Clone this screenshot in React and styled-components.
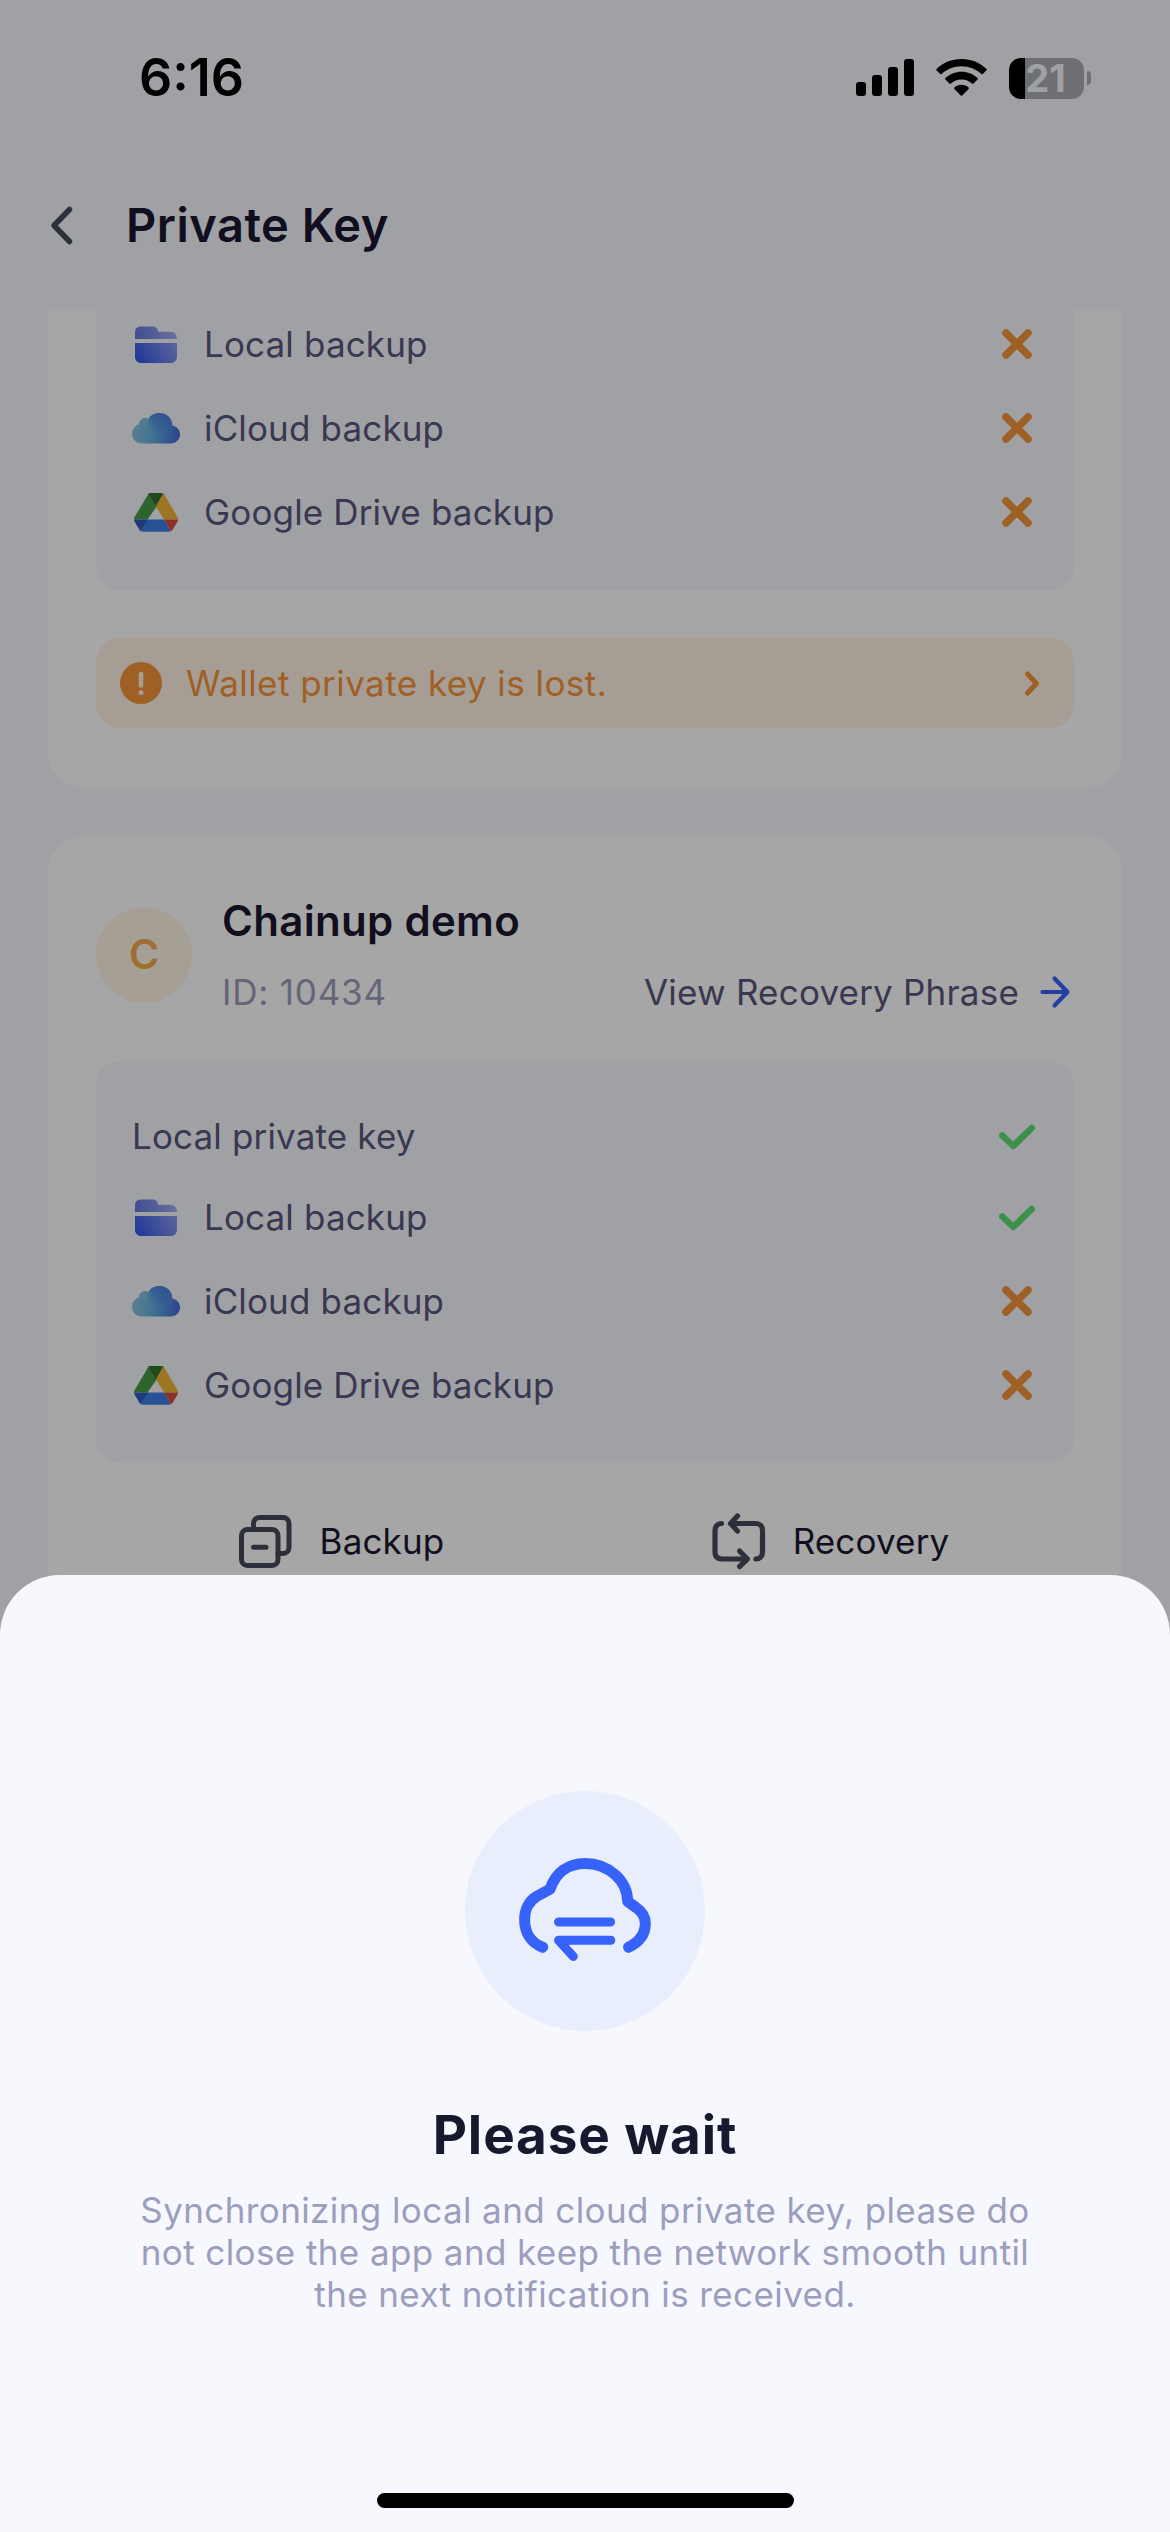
import React from "react";
import styled, { createGlobalStyle } from "styled-components";

const GlobalStyle = createGlobalStyle`
  *, *::before, *::after { box-sizing: border-box; }
  html, body { margin: 0; padding: 0; }
  body {
    background: #f6f8fe;
    font-family: Inter, "Liberation Sans", sans-serif;
  }
  svg { display: block; flex: none; }
`;

const Screen = styled.div`
  position: relative;
  width: 1170px;
  height: 2532px;
  overflow: hidden;
  background: #f6f8fe;
  display: flex;
  flex-direction: column;
`;

const StatusBar = styled.div`
  height: 156px;
  padding: 0 79px 0 139px;
  display: flex;
  align-items: center;
  justify-content: space-between;
`;

const Time = styled.div`
  font-size: 52px;
  font-weight: 600;
  line-height: 60px;
  letter-spacing: 0;
  color: #000;
`;

const StatusIcons = styled.div`
  display: flex;
  align-items: center;
  gap: 22px;
`;

const BatteryWrap = styled.div`
  display: flex;
  align-items: center;
  gap: 3px;
`;

const Battery = styled.div`
  width: 75px;
  height: 41px;
  padding-right: 2px;
  border-radius: 12px;
  background: linear-gradient(90deg, #000 16px, #abadb2 16px);
  color: #f6f8fe;
  font-size: 38px;
  font-weight: 700;
  line-height: 41px;
  letter-spacing: 0;
  text-align: center;
`;

const BatteryKnob = styled.div`
  width: 4px;
  height: 14px;
  border-radius: 0 4px 4px 0;
  background: #abadb2;
`;

const NavBar = styled.div`
  height: 153px;
  padding: 0 48px 15px;
  display: flex;
  align-items: center;
  gap: 48px;
`;

const NavTitle = styled.h1`
  margin: 0;
  font-size: 47px;
  font-weight: 600;
  line-height: 60px;
  letter-spacing: 0.5px;
  color: #1b1830;
`;

const List = styled.div`
  flex: 1;
  overflow: hidden;
  padding: 0 48px;
  display: flex;
  flex-direction: column;
  gap: 48px;
`;

const Card = styled.section`
  flex: none;
  padding: ${(p) => (p.$clipped ? "0 48px 60px" : "60px 48px 60px")};
  border-radius: ${(p) => (p.$clipped ? "0 0 36px 36px" : "36px")};
  background: #fff;
`;

const Panel = styled.div`
  margin-top: ${(p) => (p.$clipped ? "-7px" : "47px")};
  padding: ${(p) => (p.$clipped ? "0 36px 36px" : "36px")};
  border-radius: ${(p) => (p.$clipped ? "0 0 24px 24px" : "24px")};
  background: #f6f8fe;
`;

const Row = styled.div`
  height: ${(p) => p.$height || 84}px;
  display: flex;
  align-items: center;
  gap: 24px;
`;

const Label = styled.span`
  flex: ${(p) => (p.$grow ? 1 : "none")};
  font-size: 35px;
  line-height: 44px;
  letter-spacing: ${(p) => p.$spacing ?? 0.15}px;
  color: ${(p) => p.$color || "#59567b"};
  white-space: nowrap;
`;

const Banner = styled.div`
  height: 90px;
  margin-top: 48px;
  padding: 0 24px;
  border-radius: 24px;
  background: #fff2e5;
  display: flex;
  align-items: center;
  gap: 24px;
`;

const Header = styled.div`
  display: flex;
  align-items: center;
  gap: 30px;
`;

const Avatar = styled.div`
  width: 96px;
  height: 96px;
  flex: none;
  border-radius: 50%;
  background: #fff5e6;
  color: #f6a94a;
  font-size: 41px;
  font-weight: 600;
  line-height: 95px;
  text-align: center;
`;

const HeaderBody = styled.div`
  flex: 1;
  display: flex;
  flex-direction: column;
  gap: 24px;
`;

const WalletName = styled.h2`
  margin: 0;
  font-size: 42px;
  font-weight: 600;
  line-height: 50px;
  letter-spacing: 0.3px;
  color: #1b1830;
`;

const HeaderLine = styled.div`
  display: flex;
  align-items: center;
  justify-content: space-between;
`;

const LinkGroup = styled.div`
  display: flex;
  align-items: center;
  gap: 19px;
`;

const Actions = styled.div`
  padding-top: 50px;
  display: grid;
  grid-template-columns: 1fr 1fr;
`;

const Action = styled.div`
  height: 56px;
  display: flex;
  align-items: center;
  justify-content: center;
  gap: 27px;
`;

const Overlay = styled.div`
  position: absolute;
  inset: 0;
  background: rgba(0, 0, 0, 0.35);
  display: flex;
  flex-direction: column;
  justify-content: flex-end;
`;

const Sheet = styled.div`
  height: 957px;
  padding: 216px 0 24px;
  border-radius: 60px 60px 0 0;
  background: #f6f8fe;
  display: flex;
  flex-direction: column;
  align-items: center;
`;

const SheetIcon = styled.div`
  width: 240px;
  height: 240px;
  border-radius: 50%;
  background: #e9eefd;
`;

const SheetTitle = styled.h2`
  margin: 72px 0 0;
  font-size: 53px;
  font-weight: 700;
  line-height: 64px;
  letter-spacing: 0.9px;
  color: #18182e;
`;

const SheetText = styled.p`
  margin: 22px 0 0;
  font-size: 35px;
  line-height: 42px;
  letter-spacing: 0.4px;
  color: #9d9dbd;
  text-align: center;
  white-space: nowrap;
`;

const HomeIndicator = styled.div`
  width: 417px;
  height: 15px;
  margin-top: auto;
  border-radius: 8px;
  background: #000;
`;

const SignalIcon = () => (
  <svg width="58" height="38" viewBox="0 0 58 38">
    <rect x="0" y="23" width="10" height="14" rx="3" />
    <rect x="16" y="16" width="10" height="21" rx="3" />
    <rect x="32" y="8" width="10" height="29" rx="3" />
    <rect x="48" y="0" width="10" height="37" rx="3" />
  </svg>
);

const WifiIcon = () => (
  <svg width="51" height="38" viewBox="0 0 51 38">
    <path d="M25.5 0C35.200 0 44 3.700 50.500 9.900C50.900 10.300 50.900 10.900 50.500 11.300L46.800 15C46.400 15.400 45.800 15.400 45.400 15C40.200 10.200 33.200 7.300 25.500 7.300C17.800 7.300 10.800 10.200 5.600 15C5.200 15.400 4.600 15.400 4.200 15L.5 11.300C.1 10.900 .1 10.300 .5 9.900C7 3.700 15.800 0 25.500 0Z" />
    <path d="M25.500 12.800C31.700 12.800 37.400 15.200 41.600 19.100C42 19.500 42 20.100 41.600 20.500L37.500 24.500C37.100 24.900 36.500 24.900 36.100 24.500C33.300 22 29.600 20.400 25.500 20.400C21.400 20.400 17.700 22 14.900 24.500C14.500 24.900 13.900 24.900 13.500 24.500L9.400 20.500C9 20.100 9 19.500 9.400 19.100C13.600 15.200 19.300 12.800 25.500 12.800Z" />
    <path d="M25.500 25.800C28.200 25.800 30.700 26.800 32.600 28.500C33 28.900 33 29.500 32.600 29.900L26.200 36.500C25.800 36.900 25.200 36.900 24.800 36.500L18.400 29.900C18 29.500 18 28.900 18.400 28.500C20.300 26.800 22.800 25.800 25.500 25.800Z" />
  </svg>
);

const BackIcon = () => (
  <svg width="30" height="48" viewBox="0 0 30 48" fill="none" stroke="#464b5b" strokeWidth="5.500" strokeLinecap="round" strokeLinejoin="round">
    <path d="M21.500 8.500L6 24.500L21.500 40.500" />
  </svg>
);

const FolderIcon = () => (
  <svg width="48" height="48" viewBox="0 0 48 48">
    <defs>
      <linearGradient id="folderTop" x1="3" y1="20" x2="45" y2="10" gradientUnits="userSpaceOnUse">
        <stop stopColor="#6077e0" />
        <stop offset="1" stopColor="#a3aff0" />
      </linearGradient>
      <linearGradient id="folderBody" x1="5" y1="42" x2="44" y2="20" gradientUnits="userSpaceOnUse">
        <stop stopColor="#3255ee" />
        <stop offset="1" stopColor="#909fea" />
      </linearGradient>
    </defs>
    <path fill="url(#folderTop)" d="M3 19V12.500C3 8.500 5.500 6.500 9 6.500H20.500C24 6.500 26 8.500 26 11.700H38C42.500 11.700 45 14.500 45 19Z" />
    <path fill="url(#folderBody)" d="M3 23H45V36.500C45 40.500 42.500 43 38.500 43H9.500C5.500 43 3 40.500 3 36.500Z" />
  </svg>
);

const CloudIcon = () => (
  <svg width="48" height="48" viewBox="0 0 48 48">
    <defs>
      <linearGradient id="cloudBase" x1="0" y1="26" x2="48" y2="30" gradientUnits="userSpaceOnUse">
        <stop stopColor="#8ec4dc" />
        <stop offset="0.45" stopColor="#62aede" />
        <stop offset="1" stopColor="#4169d8" />
      </linearGradient>
      <linearGradient id="cloudTop" x1="18" y1="30" x2="38" y2="14" gradientUnits="userSpaceOnUse">
        <stop stopColor="#66b3dc" stopOpacity="0" />
        <stop offset="0.45" stopColor="#5494de" />
        <stop offset="1" stopColor="#4a7fdb" />
      </linearGradient>
      <linearGradient id="cloudPuff" x1="8" y1="14" x2="14" y2="28" gradientUnits="userSpaceOnUse">
        <stop stopColor="#7fc0e0" />
        <stop offset="1" stopColor="#8ec4dc" stopOpacity="0" />
      </linearGradient>
    </defs>
    <path fill="url(#cloudBase)" d="M10 39.500C4.500 39.500 0 35.500 0 30C0 25 3.200 21.500 7 20.300C7.300 16.500 10.200 14 13.500 14C14.700 14 15.700 14.300 16.600 14.900C18.500 11.300 22.500 9 27.300 9C34.500 9 40 14.200 40.300 21.500C45 22.500 48 26 48 30.300C48 35.500 44 39.500 38.500 39.500Z" />
    <path fill="url(#cloudTop)" d="M16.600 14.900C18.500 11.300 22.500 9 27.300 9C34.500 9 40 14.200 40.300 21.500C39.800 28 35 32 29 32C21 32 14 25 16.600 14.900Z" />
    <path fill="url(#cloudPuff)" d="M7 20.300C7.300 16.500 10.200 14 13.500 14C14.700 14 15.700 14.300 16.600 14.900C15.500 18 16 20 17 22C14 24 9 23 7 20.300Z" />
  </svg>
);

const DriveIcon = () => (
  <svg width="48" height="48" viewBox="0 0 48 48">
    <path fill="#479c47" d="M16 6.500C16.400 5.700 17.200 5 18 5L25 18L15.500 31.500H2C2 30.500 2.300 29.500 2.800 28.700Z" />
    <path fill="#35702f" d="M16.500 5.800C17 5.300 17.700 5 18.500 5H29.500C30.300 5 31 5.300 31.500 5.800L24 18.500Z" />
    <path fill="#f0b536" d="M31.200 5.500C31.800 5.800 32.300 6.300 32.600 6.900L45.300 28.800C45.800 29.600 46 30.500 46 31.500H32L24 18.500Z" />
    <path fill="#3d7de6" d="M15.500 31.500H32L39 43.200C38.400 43.500 37.700 43.700 37 43.700H11C10.300 43.700 9.700 43.500 9 43.200Z" />
    <path fill="#2e5bb8" d="M2 31.500H16L9 43.200C8.300 42.800 7.700 42.200 7.300 41.500L2.800 33.900C2.300 33.200 2 32.300 2 31.500Z" />
    <path fill="#d84c3c" d="M32 31.500H46C46 32.300 45.700 33.200 45.300 33.900L40.700 41.700C40.300 42.300 39.700 42.900 39 43.200Z" />
  </svg>
);

const CrossMark = () => (
  <svg width="42" height="42" viewBox="0 0 42 42" fill="none" stroke="#f5943b" strokeWidth="7.500" strokeLinecap="round">
    <path d="M10 10L32 32M32 10L10 32" />
  </svg>
);

const CheckMark = () => (
  <svg width="42" height="42" viewBox="0 0 42 42" fill="none" stroke="#5ede72" strokeWidth="6.500" strokeLinecap="round" strokeLinejoin="round">
    <path d="M6.300 20.500L17.300 31L35.700 13" />
  </svg>
);

const AlertIcon = () => (
  <svg width="42" height="42" viewBox="0 0 42 42">
    <circle cx="21" cy="21" r="21" fill="#f5943b" />
    <path d="M21 12V23.500" stroke="#fff2e5" strokeWidth="4.500" strokeLinecap="round" />
    <circle cx="21" cy="30.500" r="2.500" fill="#fff2e5" />
  </svg>
);

const ChevronIcon = () => (
  <svg width="36" height="36" viewBox="0 0 36 36" fill="none" stroke="#f5943b" strokeWidth="5" strokeLinecap="round" strokeLinejoin="round">
    <path d="M13.500 9L22.500 18.500L13.500 28" />
  </svg>
);

const ArrowIcon = () => (
  <svg width="36" height="36" viewBox="0 0 36 36" fill="none" stroke="#3662ff" strokeWidth="4.200" strokeLinecap="round" strokeLinejoin="round">
    <path d="M4.500 18H29M16.500 4.500L29.500 18L16.500 31.500" />
  </svg>
);

const BackupIcon = () => (
  <svg width="56" height="56" viewBox="0 0 56 56" fill="none" stroke="#464b5b" strokeWidth="5" strokeLinecap="round" strokeLinejoin="round">
    <rect x="4.500" y="16.500" width="36.500" height="36" rx="6" />
    <path d="M16.500 16V10.500C16.500 7 19 4.500 22.500 4.500H46C49.500 4.500 52 7 52 10.500V34.500C52 38 49.500 40.500 46 40.500H41" />
    <path d="M16.500 34.200H29" />
  </svg>
);

const RecoveryIcon = () => (
  <svg width="56" height="60" viewBox="0 0 56 60" fill="none" stroke="#464b5b" strokeWidth="5.200" strokeLinecap="round" strokeLinejoin="round">
    <path d="M11.500 12.500C7.500 12.500 5 15.500 5 19.500V41C5 45.500 7.500 48 12 48H36" />
    <path d="M29.500 40L37.500 48L29.500 55.500" />
    <path d="M46 48C50 48 52.500 45 52.500 41V19.500C52.500 15 50 12.500 45.500 12.500H22" />
    <path d="M27.500 5L20.500 12.500L27.500 20" />
  </svg>
);

const SyncCloudIcon = () => (
  <svg width="240" height="240" viewBox="0 0 240 240" fill="none" stroke="#3762fa" strokeLinecap="round" strokeLinejoin="round">
    <path
      strokeWidth="11"
      d="M77.700 156.200C66 152 59.600 141.500 59.600 128.500C59.600 118.500 64 110 71.500 105.500L85 98.200C90.500 82 103 72.400 120 72.400C144 72.400 162.500 90 162.700 110.500L171 116.500C177 120.500 180.300 125.500 180.300 132.500C180.300 143 174.500 151 163.500 156.200"
    />
    <path strokeWidth="9" d="M93.500 131H145.600M145.800 149.200H93.500L108.300 165.500" />
  </svg>
);

const sources = [
  { icon: FolderIcon, name: "Local backup" },
  { icon: CloudIcon, name: "iCloud backup" },
  { icon: DriveIcon, name: "Google Drive backup" },
];

const BackupRows = ({ done = [] }) =>
  sources.map(({ icon: Icon, name }) => (
    <Row key={name}>
      <Icon />
      <Label $grow>{name}</Label>
      {done.includes(name) ? <CheckMark /> : <CrossMark />}
    </Row>
  ));

export default function App() {
  return (
    <>
      <GlobalStyle />
      <Screen>
        <StatusBar>
          <Time>6:16</Time>
          <StatusIcons>
            <SignalIcon />
            <WifiIcon />
            <BatteryWrap>
              <Battery>21</Battery>
              <BatteryKnob />
            </BatteryWrap>
          </StatusIcons>
        </StatusBar>
        <NavBar>
          <BackIcon />
          <NavTitle>Private Key</NavTitle>
        </NavBar>
        <List>
          <Card $clipped>
            <Panel $clipped>
              <BackupRows />
            </Panel>
            <Banner>
              <AlertIcon />
              <Label $grow $color="#f5943b" $spacing={0.45}>Wallet private key is lost.</Label>
              <ChevronIcon />
            </Banner>
          </Card>
          <Card>
            <Header>
              <Avatar>C</Avatar>
              <HeaderBody>
                <WalletName>Chainup demo</WalletName>
                <HeaderLine>
                  <Label $color="#9b9bb8" $spacing={0.8}>ID: 10434</Label>
                  <LinkGroup>
                    <Label $spacing={0.2}>View Recovery Phrase</Label>
                    <ArrowIcon />
                  </LinkGroup>
                </HeaderLine>
              </HeaderBody>
            </Header>
            <Panel>
              <Row $height={78}>
                <Label $grow>Local private key</Label>
                <CheckMark />
              </Row>
              <BackupRows done={["Local backup"]} />
            </Panel>
            <Actions>
              <Action>
                <BackupIcon />
                <Label $color="#1b1830">Backup</Label>
              </Action>
              <Action>
                <RecoveryIcon />
                <Label $color="#1b1830">Recovery</Label>
              </Action>
            </Actions>
          </Card>
        </List>
        <Overlay>
          <Sheet>
            <SheetIcon>
              <SyncCloudIcon />
            </SheetIcon>
            <SheetTitle>Please wait</SheetTitle>
            <SheetText>
              Synchronizing local and cloud private key, please do
              <br />
              not close the app and keep the network smooth until
              <br />
              the next notification is received.
            </SheetText>
            <HomeIndicator />
          </Sheet>
        </Overlay>
      </Screen>
    </>
  );
}
